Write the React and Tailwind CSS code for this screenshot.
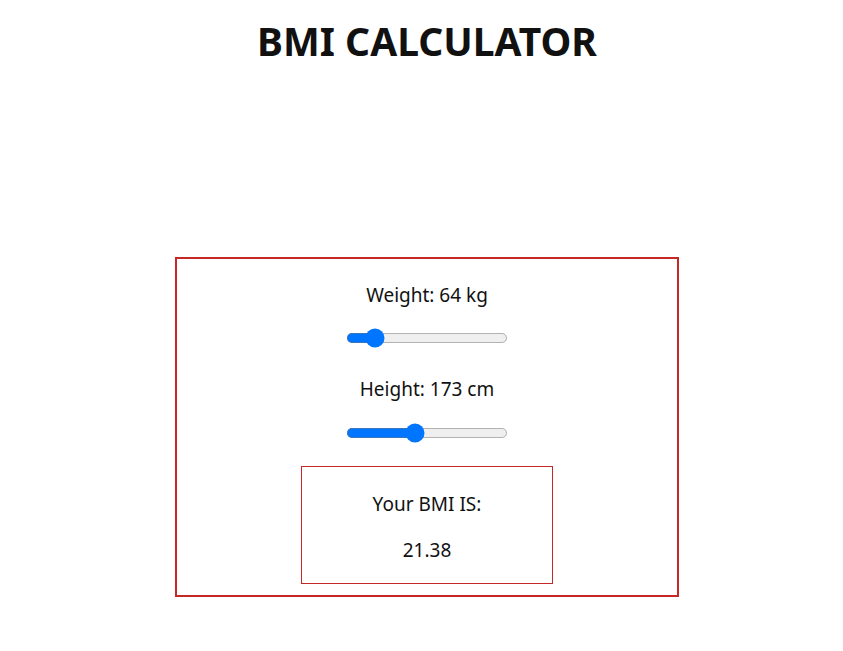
export default function App() {
  return (
    <div className="min-h-[651px] bg-white pl-[11px] font-['Noto_Sans',sans-serif] text-[#111]">
      <h1 className="pt-[14px] text-center text-[39px] font-bold leading-[54px]">BMI CALCULATOR</h1>
      <div className="mx-auto mt-[189px] flex h-[340px] w-[504px] flex-col items-center border-2 border-[#c62828]">
        <div className="mt-[23px] text-[19px] leading-[27px]">Weight: 64 kg</div>
        <div className="mt-[19px] flex h-[20px] items-center">
          <input type="range" min="40" max="220" defaultValue="64" className="m-0 [zoom:1.25]" />
        </div>
        <div className="mt-[28px] text-[19px] leading-[27px]">Height: 173 cm</div>
        <div className="mt-[20px] flex h-[20px] items-center">
          <input type="range" min="100" max="275" defaultValue="173" className="m-0 [zoom:1.25]" />
        </div>
        <div className="mt-[23px] flex h-[118px] w-[252px] flex-col items-center border border-[#c62828]">
          <div className="mt-[24px] text-[19px] leading-[27px]">Your BMI IS:</div>
          <div className="mt-[19px] text-[19px] leading-[27px]">21.38</div>
        </div>
      </div>
    </div>
  );
}
